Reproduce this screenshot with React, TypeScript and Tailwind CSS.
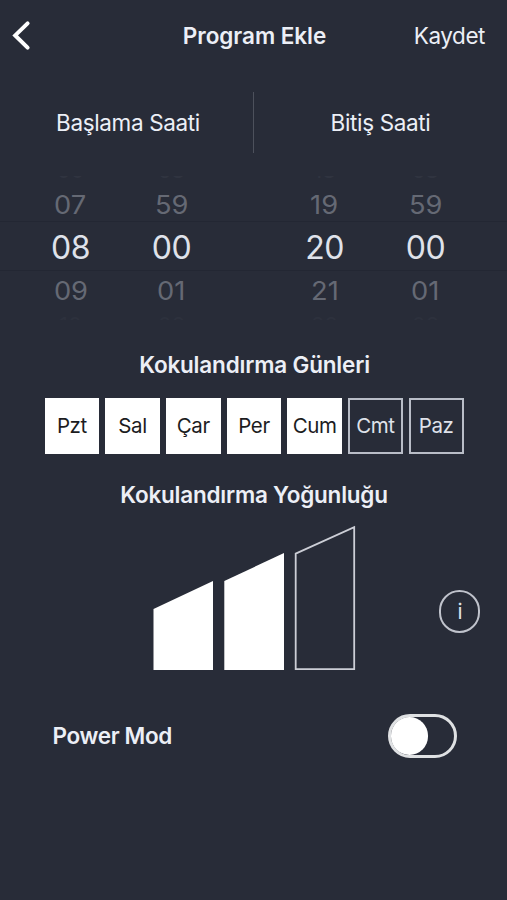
import { useState } from "react";

type Column = {
  before: string;
  prev: string;
  value: string;
  next: string;
  after: string;
};

const COLUMNS: Column[] = [
  { before: "06", prev: "07", value: "08", next: "09", after: "10" },
  { before: "58", prev: "59", value: "00", next: "01", after: "02" },
  { before: "18", prev: "19", value: "20", next: "21", after: "22" },
  { before: "58", prev: "59", value: "00", next: "01", after: "02" },
];

const DAYS = ["Pzt", "Sal", "Çar", "Per", "Cum", "Cmt", "Paz"];

const BARS = [
  "M153.5 609 L213 581 V670 H153.5 Z",
  "M224.3 581 L284 553 V670 H224.3 Z",
  "M295.7 553.6 L354.2 527.2 V669.2 H295.7 Z",
];

function PickerColumn({ column }: { column: Column }) {
  return (
    <div className="flex w-[101px] flex-col items-center">
      {/* outermost rows only peek in at the wheel's edges */}
      <div className="flex h-[6px] w-full items-end justify-center overflow-hidden text-[22px] leading-[22px] text-[#303440]">
        <span className="-translate-y-px">{column.before}</span>
      </div>
      <div className="flex h-[40px] scale-x-[1.07] items-center pt-[6px] text-[25.5px] text-[#656974]">
        {column.prev}
      </div>
      <div className="flex h-[49px] items-center pt-[2px] text-[32px] tracking-[-0.5px] text-[#dfe2ea]">
        {column.value}
      </div>
      <div className="flex h-[40px] scale-x-[1.07] items-center text-[25.5px] text-[#656974]">
        {column.next}
      </div>
      <div className="h-[9px] w-full overflow-hidden text-center text-[22px] leading-[28px] text-[#2d313d]">
        {column.after}
      </div>
    </div>
  );
}

export default function App() {
  const [days, setDays] = useState([0, 1, 2, 3, 4]);
  const [level, setLevel] = useState(2);
  const [power, setPower] = useState(false);

  const toggleDay = (index: number) =>
    setDays((prev) =>
      prev.includes(index) ? prev.filter((d) => d !== index) : [...prev, index]
    );

  return (
    <div className="flex h-[900px] w-[507px] flex-col overflow-hidden bg-[#282c38] font-['Inter',sans-serif] text-[#eceff6]">
      <header className="grid h-[72px] grid-cols-[1fr_auto_1fr] items-center pr-[10px] pl-[12px] text-[22.5px]">
        <button aria-label="Geri" className="w-fit">
          <svg width="20" height="32" viewBox="0 0 20 32" fill="none">
            <path
              d="M15.6 3.4 L3.2 15.4 L15.6 27.6"
              stroke="#fff"
              strokeWidth="4"
              strokeLinecap="round"
              strokeLinejoin="miter"
            />
          </svg>
        </button>
        <h1 className="-mt-px font-semibold tracking-[-0.05px]">
          Program Ekle
        </h1>
        <button className="mr-[12px] -mt-px justify-self-end tracking-[-0.45px]">
          Kaydet
        </button>
      </header>

      <div className="mt-[20px] flex h-[61px] items-center text-[22.5px] tracking-[-0.35px]">
        <div className="w-[253px] pl-[3px] text-center">Başlama Saati</div>
        <div className="h-full w-px bg-[#4d515c]" />
        <div className="w-[253px] text-center">Bitiş Saati</div>
      </div>

      <div className="relative mt-[23px] flex h-[144px] justify-between pr-[31px] pl-[20px]">
        <div className="absolute inset-x-0 top-[45px] h-[50px] border-y border-[#232733]" />
        <div className="relative flex">
          <PickerColumn column={COLUMNS[0]} />
          <PickerColumn column={COLUMNS[1]} />
        </div>
        <div className="relative flex">
          <PickerColumn column={COLUMNS[2]} />
          <PickerColumn column={COLUMNS[3]} />
        </div>
      </div>

      <h2 className="mt-[29px] pl-[2px] text-center text-[22.5px] leading-[32px] font-semibold tracking-[-0.18px]">
        Kokulandırma Günleri
      </h2>
      <div className="mt-[17px] ml-[44.5px] grid h-[56px] w-[419px] grid-cols-7 gap-[6px] text-[20.5px] tracking-[-0.4px]">
        {DAYS.map((day, index) => (
          <button
            key={day}
            onClick={() => toggleDay(index)}
            className={
              days.includes(index)
                ? "bg-white text-[#1c1c1e]"
                : "border-2 border-[#b9bdc7] text-[#dfe2ea]"
            }
          >
            {day}
          </button>
        ))}
      </div>

      <h2 className="mt-[25px] pl-px text-center text-[22.5px] leading-[32px] font-semibold tracking-[-0.22px]">
        Kokulandırma Yoğunluğu
      </h2>

      <div className="mt-[10px] flex h-[156px] items-start justify-between pr-[27px] pl-[148px]">
        <svg width="212" height="156" viewBox="148 521 212 156">
          {BARS.map((d, index) => (
            <path
              key={d}
              d={d}
              onClick={() => setLevel(index + 1)}
              fill={index < level ? "#fff" : "transparent"}
              stroke={index < level ? "none" : "#ccced6"}
              strokeWidth="1.8"
            />
          ))}
        </svg>
        <button
          aria-label="Bilgi"
          className="mt-[69px] flex h-[43px] w-[41px] items-center justify-center rounded-full border-2 border-[#c0c3cc] pl-px text-[21px] text-[#dfe2ea]"
        >
          i
        </button>
      </div>

      <div className="mt-[36px] flex h-[46px] items-center justify-between pr-[50px] pl-[52.5px]">
        <span className="-mt-px text-[22.5px] font-semibold tracking-[-0.35px]">
          Power Mod
        </span>
        <button
          role="switch"
          aria-checked={power}
          aria-label="Power Mod"
          onClick={() => setPower(!power)}
          className={`flex h-[44px] w-[69px] items-center rounded-full border-[3px] border-[#dfe1e3] ${
            power ? "justify-end" : "justify-start"
          }`}
        >
          <span className="h-[38px] w-[37px] rounded-full bg-white" />
        </button>
      </div>
    </div>
  );
}
